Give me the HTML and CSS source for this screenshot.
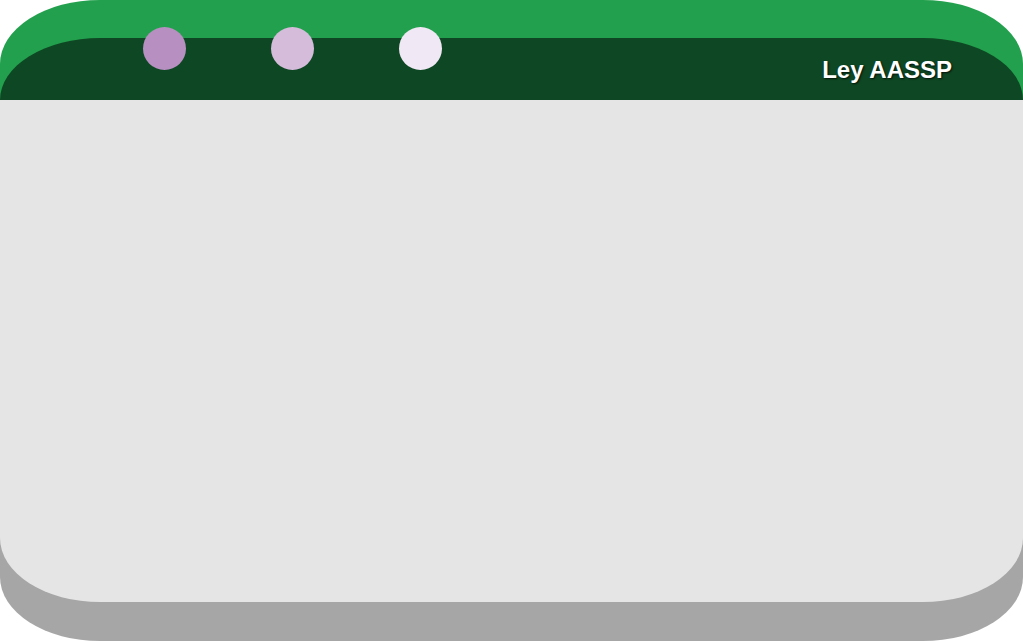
FILE: index.html
```html
<!DOCTYPE html>
<html lang="es">
<head>
<meta charset="utf-8">
<title>Ley AASSP</title>
<link rel="stylesheet" href="styles.css">
</head>
<body>
<div class="window">
  <div class="panel">
    <header class="header">
      <div class="dots">
        <span class="dot dot-1"></span>
        <span class="dot dot-2"></span>
        <span class="dot dot-3"></span>
      </div>
      <h1 class="title">Ley AASSP</h1>
    </header>
    <main class="body"></main>
  </div>
</div>
</body>
</html>
```
FILE: styles.css
```css
html, body {
  margin: 0;
  padding: 0;
  background: #ffffff;
}
body {
  width: 1023px;
  height: 641px;
  overflow: hidden;
  font-family: "Liberation Sans", Arial, sans-serif;
}
.window {
  width: 1023px;
  height: 641px;
  box-sizing: border-box;
  padding: 38px 0 39px;
  border-radius: 100px / 64px;
  background: linear-gradient(to bottom, #22a04d 0, #22a04d 50%, #a6a6a6 50%, #a6a6a6 100%);
}
.panel {
  display: flex;
  flex-direction: column;
  height: 100%;
}
.header {
  height: 62px;
  flex: none;
  display: flex;
  align-items: flex-start;
  justify-content: space-between;
  background: #0e4723;
  border-radius: 100px 100px 0 0 / 62px 62px 0 0;
  padding: 0 71px 0 143px;
}
.dots {
  display: flex;
  gap: 85px;
  margin-top: -11px;
}
.dot {
  width: 43px;
  height: 43px;
  border-radius: 50%;
  display: block;
}
.dot-1 { background: #b78fc0; }
.dot-2 { background: #d5bcdb; }
.dot-3 { background: #f0e8f4; }
.title {
  margin: 17px 0 0;
  font-size: 24px;
  line-height: 30px;
  font-weight: bold;
  color: #ffffff;
  text-shadow: 1px 1px 2px rgba(0, 0, 0, 0.75);
}
.body {
  flex: 1;
  background: #e5e5e5;
  border-radius: 0 0 100px 100px / 0 0 64px 64px;
}
```
